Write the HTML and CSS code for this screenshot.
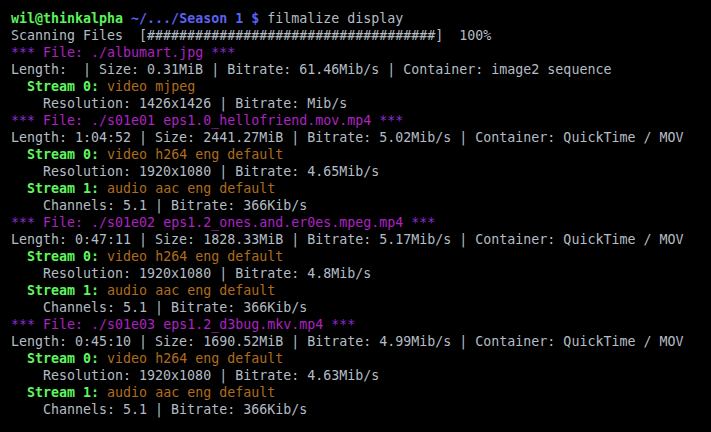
FILE: index.html
```html
<!DOCTYPE html>
<html>
<head>
  <meta charset="utf-8">
  <title>filmalize display</title>
  <link rel="stylesheet" href="styles.css">
</head>
<body>
<pre class="term"><span class="host">wil@thinkalpha</span> <span class="path">~/.../Season 1 $</span> filmalize display
Scanning Files  [####################################]  100%
<span class="stars">***</span> <span class="file">File: ./albumart.jpg</span> <span class="stars">***</span>
Length:  | Size: 0.31MiB | Bitrate: 61.46Mib/s | Container: image2 sequence
  <span class="stream">Stream 0:</span> <span class="codec">video mjpeg</span>
    Resolution: 1426x1426 | Bitrate: Mib/s
<span class="stars">***</span> <span class="file">File: ./s01e01 eps1.0_hellofriend.mov.mp4</span> <span class="stars">***</span>
Length: 1:04:52 | Size: 2441.27MiB | Bitrate: 5.02Mib/s | Container: QuickTime / MOV
  <span class="stream">Stream 0:</span> <span class="codec">video h264 eng default</span>
    Resolution: 1920x1080 | Bitrate: 4.65Mib/s
  <span class="stream">Stream 1:</span> <span class="codec">audio aac eng default</span>
    Channels: 5.1 | Bitrate: 366Kib/s
<span class="stars">***</span> <span class="file">File: ./s01e02 eps1.2_ones.and.er0es.mpeg.mp4</span> <span class="stars">***</span>
Length: 0:47:11 | Size: 1828.33MiB | Bitrate: 5.17Mib/s | Container: QuickTime / MOV
  <span class="stream">Stream 0:</span> <span class="codec">video h264 eng default</span>
    Resolution: 1920x1080 | Bitrate: 4.8Mib/s
  <span class="stream">Stream 1:</span> <span class="codec">audio aac eng default</span>
    Channels: 5.1 | Bitrate: 366Kib/s
<span class="stars">***</span> <span class="file">File: ./s01e03 eps1.2_d3bug.mkv.mp4</span> <span class="stars">***</span>
Length: 0:45:10 | Size: 1690.52MiB | Bitrate: 4.99Mib/s | Container: QuickTime / MOV
  <span class="stream">Stream 0:</span> <span class="codec">video h264 eng default</span>
    Resolution: 1920x1080 | Bitrate: 4.63Mib/s
  <span class="stream">Stream 1:</span> <span class="codec">audio aac eng default</span>
    Channels: 5.1 | Bitrate: 366Kib/s</pre>
</body>
</html>
```

FILE: styles.css
```css
html, body {
  margin: 0;
  background: #000;
}

.term {
  margin: 0;
  padding: 10px 11px;
  font-family: "DejaVu Sans Mono", monospace;
  font-size: 13.3px;
  line-height: 17px;
  color: #b4bcc4;
}

.host {
  color: #5cf25c;
  font-weight: bold;
}

.path {
  color: #5c62f0;
  font-weight: bold;
}

.stars {
  color: #8e2cd0;
}

.file {
  color: #ae22c2;
}

.stream {
  color: #5ef55e;
  font-weight: bold;
}

.codec {
  color: #b06c1e;
}
```
